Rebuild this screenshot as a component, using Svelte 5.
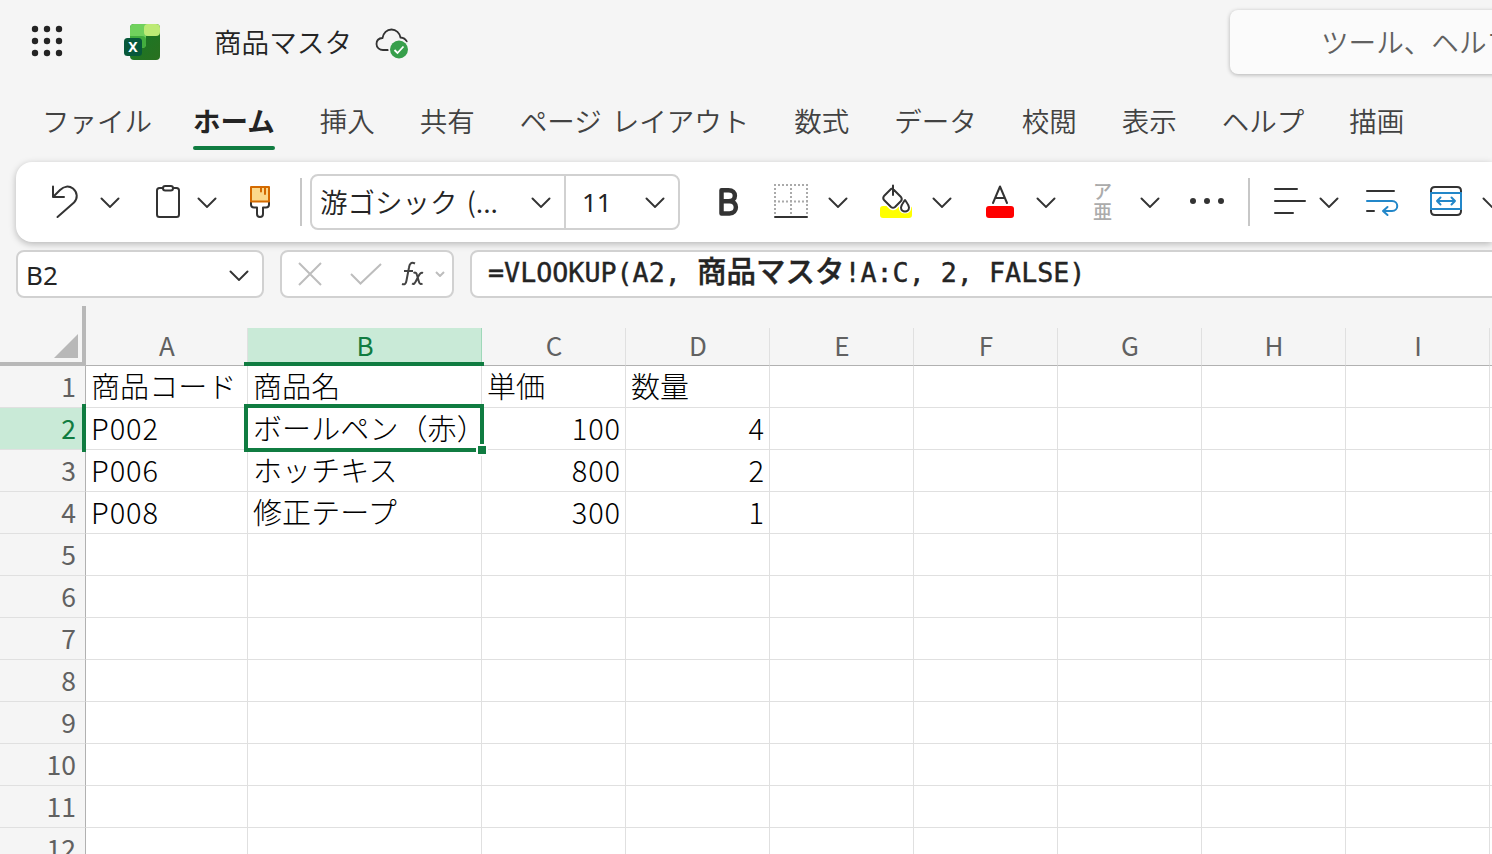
<script lang="ts">
  const tabs = ['ファイル', 'ホーム', '挿入', '共有', 'ページ レイアウト', '数式', 'データ', '校閲', '表示', 'ヘルプ', '描画'];
  const columns = ['A', 'B', 'C', 'D', 'E', 'F', 'G', 'H', 'I'];
  const rowNumbers = Array.from({ length: 12 }, (_, i) => i + 1);

  const data: Record<string, string | number> = {
    A1: '商品コード', B1: '商品名', C1: '単価', D1: '数量',
    A2: 'P002', B2: 'ボールペン（赤）', C2: 100, D2: 4,
    A3: 'P006', B3: 'ホッチキス', C3: 800, D3: 2,
    A4: 'P008', B4: '修正テープ', C4: 300, D4: 1
  };

  let activeTab = $state('ホーム');
  let selectedCol = $state('B');
  let selectedRow = $state(2);

  function select(col: string, row: number) {
    selectedCol = col;
    selectedRow = row;
  }

  function isLatin(value: string | number | undefined) {
    return /^[\x20-\x7e]+$/.test(String(value ?? ''));
  }
</script>

{#snippet chevron()}
  <svg class="chevron" width="20" height="12" viewBox="0 0 20 12"><path d="M1.500 2.500 10 11l8.500-8.500" /></svg>
{/snippet}

<div class="app">
  <header class="titlebar">
    <svg class="launcher" width="32" height="32" viewBox="0 0 32 32">
      {#each [4, 16, 28] as y}
        {#each [4, 16, 28] as x}
          <circle cx={x} cy={y} r="3.200" />
        {/each}
      {/each}
    </svg>
    <svg class="logo" width="36" height="36" viewBox="0 0 36 36">
      <defs>
        <linearGradient id="base" x1="0" y1="0" x2="1" y2="1">
          <stop offset="0" stop-color="#147a28" />
          <stop offset="1" stop-color="#2a701f" />
        </linearGradient>
      </defs>
      <rect x="6" y="0" width="30" height="36" rx="4" fill="url(#base)" />
      <path d="M10 0h16v12h-4v8q0 4-4 4h-4V12H6V4q0-4 4-4z" fill="#70d15d" />
      <path d="M6 12h12q4 0 4 4v4q0 4-4 4H6z" fill="#42ad3e" />
      <path d="M24 0h8q4 0 4 4v4q0 4-4 4h-8q-4 0-4-4V4q0-4 4-4z" fill="#bdea75" />
      <rect x="0" y="14" width="18" height="18" rx="3.500" fill="#07583a" />
      <text x="9" y="28" text-anchor="middle">X</text>
    </svg>
    <span class="filename">商品マスタ</span>
    <svg class="cloud" width="34" height="32" viewBox="0 0 34 32">
      <path d="M13 22H8C4.500 22 1.500 19.500 1.500 16s2.500-5.800 6-6C8.300 5.200 11.800 1.500 16.500 1.500s8.200 3.500 9 8c2.800.2 5 1.500 6.200 4" fill="none" stroke="#333" stroke-width="1.800" stroke-linecap="round" />
      <circle cx="24" cy="21.500" r="10.500" fill="#f5f5f5" />
      <circle cx="24" cy="21.500" r="9" fill="#379f4b" />
      <path d="m19.500 22 3 3 6-6.500" fill="none" stroke="#fff" stroke-width="1.800" />
    </svg>
    <div class="search">ツール、ヘルプなどを検索</div>
  </header>

  <nav class="tabs">
    {#each tabs as tab}
      <button class:active={activeTab === tab} onclick={() => (activeTab = tab)}>{tab}</button>
    {/each}
  </nav>

  <div class="ribbon">
    <svg class="icon undo" width="28" height="40" viewBox="0 0 28 40">
      <path d="M2 4.500v10.500h11M2.500 14.500 9 8C13 4 18 3.500 22 6.500c4.800 4 4.800 10 1 14L6.500 35" />
    </svg>
    {@render chevron()}
    <svg class="icon paste" width="26" height="40" viewBox="0 0 26 40">
      <rect x="2" y="6" width="22" height="29" rx="2.500" />
      <rect x="8" y="4" width="10" height="4.500" rx="2.200" fill="#fff" />
    </svg>
    {@render chevron()}
    <svg class="icon brush" width="22" height="40" viewBox="0 0 22 40">
      <path d="M2 20v2.500q0 3 3 3h3V32q0 3 3 3t3-3v-6.500h3q3 0 3-3V20" />
      <path d="M2 5h18v14.500H2z" fill="#fbd98b" stroke="#d46a00" />
      <path d="M12 5v4.500M16 5v7" stroke="#d46a00" />
    </svg>
    <i class="sep first"></i>
    <div class="fontbox">
      <span class="fontname">游ゴシック (...</span>
      {@render chevron()}
      <span class="fontsize">11</span>
      {@render chevron()}
    </div>
    <svg class="icon bold" width="20" height="40" viewBox="0 0 20 40">
      <path d="M2.500 8.200V31.400M2.500 8.200h7c8.500 0 8.500 11 0 11h-7h8c8.500 0 8.500 12.200 0 12.200h-8" stroke-width="4.500" />
    </svg>
    <svg class="icon borders" width="34" height="40" viewBox="0 0 34 40">
      <path d="M0 3h34M0 19.500h34M1 6v27M17 6v27M33 6v27" stroke="#aaa" stroke-dasharray="2 2" stroke-linecap="butt" />
      <path d="M1 35h32" />
    </svg>
    {@render chevron()}
    <svg class="icon fill" width="34" height="40" viewBox="0 0 34 40">
      <rect x="1" y="24" width="32" height="12" rx="3" fill="#ff0" stroke="none" />
      <path d="m14 7 8 8q1.500 2 0 4l-6 6q-2 1.500-4 0l-7-7q-1.500-2 0-4l7-7q1-1 2 0z" fill="#fff" stroke="#fff" stroke-width="5" />
      <path d="m26 18 3.500 6q1 5-3.500 5t-3.500-5z" fill="#fff" stroke="#fff" stroke-width="5" />
      <path d="m14 7 8 8q1.500 2 0 4l-6 6q-2 1.500-4 0l-7-7q-1.500-2 0-4l7-7q1-1 2 0zM14 3.500V13" />
      <path d="M26 18c-2 3-4 5-4 7.500s2 4 4 4 4-1.500 4-4-2-4.500-4-7.500z" fill="#fff" />
    </svg>
    {@render chevron()}
    <svg class="icon fontcolor" width="28" height="40" viewBox="0 0 28 40">
      <path d="m7 21 7-16.500L21 21M9.500 16h9" />
      <rect x="0" y="24" width="28" height="12" rx="3" fill="#f00" stroke="none" />
    </svg>
    {@render chevron()}
    <div class="phonetic"><span>ア</span><span>亜</span></div>
    {@render chevron()}
    <svg class="icon more" width="36" height="40" viewBox="0 0 36 40">
      <circle cx="4" cy="19" r="3" /><circle cx="18" cy="19" r="3" /><circle cx="32" cy="19" r="3" />
    </svg>
    <i class="sep second"></i>
    <svg class="icon align" width="32" height="40" viewBox="0 0 32 40">
      <path d="M1 7h22M1 19h30M1 31h18" />
    </svg>
    {@render chevron()}
    <svg class="icon wrap" width="34" height="40" viewBox="0 0 34 40">
      <path d="M2 9h27M2 29h7" />
      <path d="M2 19h25c7 0 7 10 0 10H18m4.500-4L18 29l4.500 4" stroke="#2387c9" />
    </svg>
    <svg class="icon merge" width="32" height="40" viewBox="0 0 32 40">
      <path d="M1 10V9q0-4 4-4h22q4 0 4 4v1M1 28v1q0 4 4 4h22q4 0 4-4v-1" />
      <path d="M1 11h30v16H1zM7 19h18M10.500 15.500 7 19l3.500 3.500M21.500 15.500 25 19l-3.500 3.500" stroke="#2387c9" />
    </svg>
    {@render chevron()}
  </div>

  <div class="formulabar">
    <div class="box namebox"><span>{selectedCol}{selectedRow}</span>{@render chevron()}</div>
    <div class="box actions">
      <svg width="26" height="26" viewBox="0 0 26 26"><path d="m2 2 22 22M24 2 2 24" /></svg>
      <svg class="check" width="32" height="24" viewBox="0 0 32 24"><path d="m1 12 9.500 9.500L31 2" /></svg>
      <svg class="fx" width="24" height="26" viewBox="0 0 24 26">
        <path d="M14 2.500c-4-2-5.500.5-6 4L5.500 19.500c-.5 3.500-2 4.500-4.500 3.500M3 10h9M12.500 12c2-1 3 0 3.500 2l2 7c.5 2 2 2.500 3.500 1.500M22 12c-2-1-3.500 1-5 4l-2 4c-1.200 2.500-2.200 3.500-4 2.500" />
      </svg>
      <svg class="tiny" width="10" height="6" viewBox="0 0 10 6"><path d="m1 1 4 4 4-4" /></svg>
    </div>
    <div class="box formula">=VLOOKUP(A2, <span>商品マスタ</span>!A:C, 2, FALSE)</div>
  </div>

  <div class="sheet">
    <div class="corner"><svg width="24" height="24" viewBox="0 0 24 24"><path d="M24 0v24H0z" /></svg></div>
    {#each columns as col}
      <div class="colhead" class:selected={col === selectedCol}>{col}</div>
    {/each}
    <div class="colhead"></div>
    {#each rowNumbers as row}
      <div class="rowhead" class:selected={row === selectedRow}>{row}</div>
      {#each columns as col}
        <!-- svelte-ignore a11y_click_events_have_key_events, a11y_no_static_element_interactions -->
        <div
          class="cell"
          class:latin={isLatin(data[col + row])}
          class:num={typeof data[col + row] === 'number'}
          class:current={col === selectedCol && row === selectedRow}
          onclick={() => select(col, row)}
        >{data[col + row] ?? ''}</div>
      {/each}
      <div class="cell"></div>
    {/each}
  </div>
</div>

<style>
  :global(body) {
    overflow: hidden;
    background: #f5f5f5;
  }

  .app {
    width: 1492px;
    height: 854px;
    overflow: hidden;
    background: #f5f5f5;
    color: #242424;
    font-family: 'Noto Sans CJK JP', sans-serif;
  }

  .app * {
    box-sizing: border-box;
  }

  svg {
    display: block;
    flex: none;
  }

  .titlebar {
    display: flex;
    align-items: center;
    height: 84px;
    padding-left: 31px;
  }

  .launcher {
    margin-top: -2px;
    fill: #242424;
  }

  .logo {
    margin-left: 61px;
  }

  .logo text {
    font: bold 14px 'Noto Sans', sans-serif;
    fill: #fff;
  }

  .filename {
    width: 140px;
    margin: -2px 0 0 54px;
    font-size: 27.6px;
    font-weight: 350;
    white-space: nowrap;
  }

  .cloud {
    margin: 3px 0 0 23px;
  }

  .search {
    flex: none;
    width: 400px;
    height: 64px;
    margin-left: 821px;
    padding-left: 91px;
    border-radius: 8px;
    background: #fbfbfb;
    box-shadow: 0 1px 4px rgba(0, 0, 0, 0.28);
    color: #616161;
    font-size: 27.6px;
    font-weight: 350;
    line-height: 62px;
    white-space: nowrap;
  }

  .tabs {
    display: flex;
    gap: 45px;
    height: 78px;
    padding: 16px 0 12px 42px;
  }

  .tabs button {
    position: relative;
    flex: none;
    padding: 0 0 10px;
    border: 0;
    background: none;
    color: #424242;
    font: 350 27.5px/40px 'Noto Sans CJK JP', sans-serif;
    white-space: nowrap;
    word-spacing: 4px;
  }

  .tabs button:first-child {
    margin-right: -4px;
  }

  .tabs button.active {
    color: #242424;
    font-weight: 700;
  }

  .tabs button.active::after {
    content: '';
    position: absolute;
    left: 0;
    right: 0;
    bottom: 0;
    height: 4px;
    border-radius: 2px;
    background: #107c41;
  }

  .ribbon {
    display: flex;
    align-items: center;
    height: 80px;
    margin-left: 16px;
    border-radius: 16px 0 0 16px;
    background: #fff;
    box-shadow: 0 2px 7px rgba(0, 0, 0, 0.26);
  }

  .chevron {
    fill: none;
    stroke: #333;
    stroke-width: 1.9;
    stroke-linecap: round;
  }

  .icon {
    fill: none;
    stroke: #333;
    stroke-width: 2;
    stroke-linecap: round;
    stroke-linejoin: round;
  }

  .undo { margin: 0 21px 0 35px; }
  .paste { margin: 0 16px 0 35px; }
  .brush { margin-left: 32px; }
  .bold { margin-left: 39px; }
  .borders { margin: 0 20px 0 35px; }
  .fill { margin: 0 19px 0 31px; }
  .fontcolor { margin: 0 22px 0 34px; }
  .more { margin-left: 29px; fill: #333; stroke: none; }
  .align { margin: 0 13px 0 24px; }
  .wrap { margin-left: 26px; }
  .merge { margin: 0 20px 0 31px; }

  .sep {
    flex: none;
    width: 2px;
    height: 48px;
    background: #c7c7c7;
  }

  .sep.first { margin: 0 8px 0 29px; }
  .sep.second { margin-left: 23px; }

  .fontbox {
    display: flex;
    flex: none;
    align-items: center;
    width: 370px;
    height: 56px;
    border: 2px solid #d1d1d1;
    border-radius: 8px;
    font-size: 27.5px;
    font-weight: 350;
  }

  .fontname {
    width: 219px;
    margin-top: -2px;
    padding-left: 8px;
    white-space: nowrap;
    word-spacing: 3px;
  }

  .fontsize {
    width: 81px;
    height: 52px;
    margin-left: 13px;
    padding-left: 16px;
    border-left: 2px solid #d1d1d1;
    font: 26px/52px 'Noto Sans', sans-serif;
  }

  .phonetic {
    display: flex;
    flex: none;
    flex-direction: column;
    width: 20px;
    margin: -2px 27px 0 37px;
    color: #ababab;
    font-size: 19px;
    font-weight: 500;
    line-height: 20px;
  }

  .formulabar {
    display: flex;
    height: 64px;
    padding: 8px 0 8px 16px;
  }

  .box {
    display: flex;
    flex: none;
    align-items: center;
    height: 48px;
    border: 2px solid #d1d1d1;
    border-radius: 8px;
    background: #fff;
  }

  .namebox {
    justify-content: space-between;
    width: 248px;
    padding: 2px 13px 0 8px;
    font: 26px/44px 'Noto Sans', sans-serif;
  }

  .actions {
    width: 174px;
    margin: 0 16px;
    padding-left: 15px;
    fill: none;
    stroke: #bdbdbd;
    stroke-width: 2;
  }

  .check { margin-left: 27px; }
  .fx { margin-left: 19px; stroke: #424242; }
  .tiny { margin-left: 10px; }

  .formula {
    align-items: baseline;
    width: 1040px;
    padding: 0 0 0 16px;
    font-family: 'DejaVu Sans Mono', monospace;
    font-size: 26.7px;
    line-height: 35px;
    -webkit-text-stroke: 0.4px #242424;
    white-space: pre;
  }

  .formula span {
    font-family: 'Noto Sans CJK JP', sans-serif;
    font-size: 29.5px;
    font-weight: 500;
  }

  .sheet {
    display: grid;
    grid-template-columns: 86px 162px 234px repeat(8, 144px);
    grid-template-rows: 60px repeat(12, 42px);
  }

  .corner {
    display: flex;
    align-items: flex-end;
    justify-content: flex-end;
    padding: 0 4px 4px 0;
    border-right: 4px solid #b8b8b8;
    border-bottom: 4px solid #b8b8b8;
    fill: #b8b8b8;
  }

  .colhead {
    height: 38px;
    margin-top: 22px;
    padding-left: 1px;
    border-right: 1px solid #e0e0e0;
    border-bottom: 1px solid #b1b1b1;
    color: #616161;
    font-size: 26px;
    line-height: 34px;
    text-align: center;
  }

  .colhead.selected {
    position: relative;
    border-right-color: #9fd8b9;
    background: #c9ead7;
    color: #107c41;
  }

  .colhead.selected::after {
    content: '';
    position: absolute;
    left: -4px;
    right: -3px;
    bottom: -1px;
    height: 4px;
    background: #107c41;
  }

  .rowhead {
    padding-right: 9px;
    border-right: 1px solid #b1b1b1;
    border-bottom: 1px solid #e0e0e0;
    color: #616161;
    font-size: 26.5px;
    line-height: 40px;
    text-align: right;
  }

  .rowhead.selected {
    position: relative;
    background: #c9ead7;
    color: #107c41;
  }

  .rowhead.selected::after {
    content: '';
    position: absolute;
    top: -4px;
    right: -1px;
    bottom: -3px;
    width: 4px;
    background: #107c41;
  }

  .cell {
    padding: 0 4px 0 5px;
    border-right: 1px solid #e0e0e0;
    border-bottom: 1px solid #e0e0e0;
    background: #fff;
    color: #000;
    font-size: 29px;
    font-weight: 300;
    letter-spacing: 0.1px;
    line-height: 39px;
    white-space: nowrap;
  }

  .cell.latin {
    letter-spacing: 0.9px;
    line-height: 38px;
  }

  .cell.num {
    text-align: right;
  }

  .cell.current {
    position: relative;
  }

  .cell.current::before {
    content: '';
    position: absolute;
    inset: -4px -3px -3px -4px;
    border: 4px solid #107c41;
  }

  .cell.current::after {
    content: '';
    position: absolute;
    right: -5px;
    bottom: -5px;
    width: 8px;
    height: 8px;
    background: #107c41;
    box-shadow: 0 0 0 2px #fff;
  }
</style>
